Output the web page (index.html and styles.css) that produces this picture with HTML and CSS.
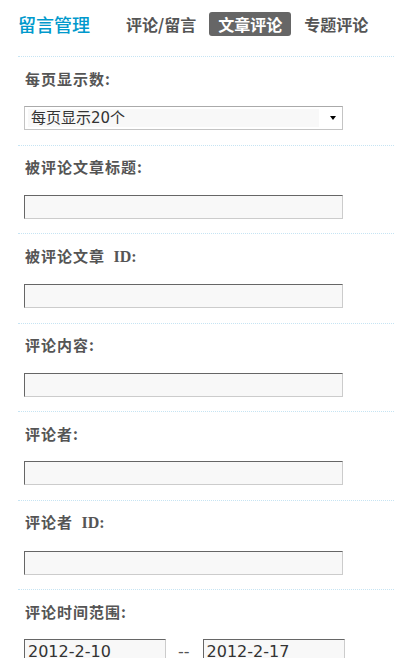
FILE: index.html
```html
<!DOCTYPE html>
<html lang="zh-CN">
<head>
<meta charset="utf-8">
<title>留言管理</title>
<link rel="stylesheet" href="styles.css">
</head>
<body>
<div class="header">
  <div class="title">留言管理</div>
  <nav class="nav">
    <a class="nav-item">评论/留言</a>
    <a class="nav-item active">文章评论</a>
    <a class="nav-item">专题评论</a>
  </nav>
</div>
<form class="form">
  <div class="row">
    <div class="label">每页显示数:</div>
    <div class="select-wrap">
      <select class="select"><option>每页显示20个</option></select>
      <span class="arrow"></span>
    </div>
  </div>
  <div class="row">
    <div class="label">被评论文章标题:</div>
    <input class="text" type="text">
  </div>
  <div class="row">
    <div class="label">被评论文章 <span class="en">ID:</span></div>
    <input class="text" type="text">
  </div>
  <div class="row">
    <div class="label">评论内容:</div>
    <input class="text" type="text">
  </div>
  <div class="row">
    <div class="label">评论者:</div>
    <input class="text" type="text">
  </div>
  <div class="row">
    <div class="label">评论者 <span class="en">ID:</span></div>
    <input class="text" type="text">
  </div>
  <div class="row">
    <div class="label">评论时间范围:</div>
    <div class="date-range">
      <input class="text date" type="text" value="2012-2-10">
      <span class="dash">--</span>
      <input class="text date" type="text" value="2012-2-17">
    </div>
  </div>
</form>
</body>
</html>
```
FILE: styles.css
```css
html, body {
  margin: 0;
  padding: 0;
  background: #fff;
}
body {
  font-family: "Noto Sans CJK SC", "DejaVu Sans", sans-serif;
  color: #555;
  overflow: hidden;
}
.header {
  display: flex;
  align-items: center;
  padding: 12px 0 20px 18px;
  height: 24px;
}
.title {
  font-size: 18px;
  line-height: 24px;
  color: #0099cc;
  font-weight: 500;
  margin-right: 27px;
}
.nav {
  display: flex;
  gap: 4px;
}
.nav-item {
  display: block;
  font-size: 16px;
  font-weight: bold;
  line-height: 24px;
  height: 24px;
  padding: 0 9px;
  color: #555;
  border-radius: 3px;
}
.nav-item.active {
  background: #666;
  color: #fff;
}
.form {
  margin: 0 0 0 18px;
}
.row {
  border-top: 1px dotted #c6e4f3;
  padding: 11.5px 0 14.5px 6px;
}
.label {
  font-size: 15px;
  font-weight: bold;
  letter-spacing: 1px;
  line-height: 20px;
  color: #555;
  margin-bottom: 17.5px;
  padding-left: 1px;
}
.label .en {
  font-family: "Liberation Serif", serif;
  font-size: 16px;
  letter-spacing: 0;
  margin-left: 4px;
}
.select-wrap {
  display: flex;
  align-items: center;
  box-sizing: border-box;
  width: 319px;
  height: 24px;
  border: 1px solid #c4c4c4;
  border-top-color: #aaa;
  background: #fff;
  padding: 2px 0 2px 3px;
}
.select {
  -webkit-appearance: none;
  appearance: none;
  border: 0;
  outline: 0;
  margin: 0;
  width: 291px;
  height: 18px;
  padding: 0 0 0 3px;
  background: #f8f8f8;
  font-family: "DejaVu Sans", "Noto Sans CJK SC", sans-serif;
  font-size: 15px;
  line-height: 18px;
  color: #333;
}
.arrow {
  width: 0;
  height: 0;
  margin-left: 11px;
  border-left: 3.5px solid transparent;
  border-right: 3.5px solid transparent;
  border-top: 4px solid #000;
}
.text {
  display: block;
  box-sizing: border-box;
  width: 319px;
  height: 24px;
  margin: 0;
  padding: 0 3px;
  border: 1px solid #ccc;
  border-top-color: #666;
  border-left-color: #666;
  background: #f8f8f8;
  font-family: "DejaVu Sans", sans-serif;
  font-size: 16px;
  color: #333;
  outline: 0;
}
.date-range {
  display: flex;
  align-items: flex-start;
}
.text.date {
  width: 142px;
}
.dash {
  margin: 0 13px 0 12px;
  font-family: "DejaVu Sans", sans-serif;
  font-size: 16px;
  line-height: 18px;
  padding-top: 4px;
  color: #555;
}
```
